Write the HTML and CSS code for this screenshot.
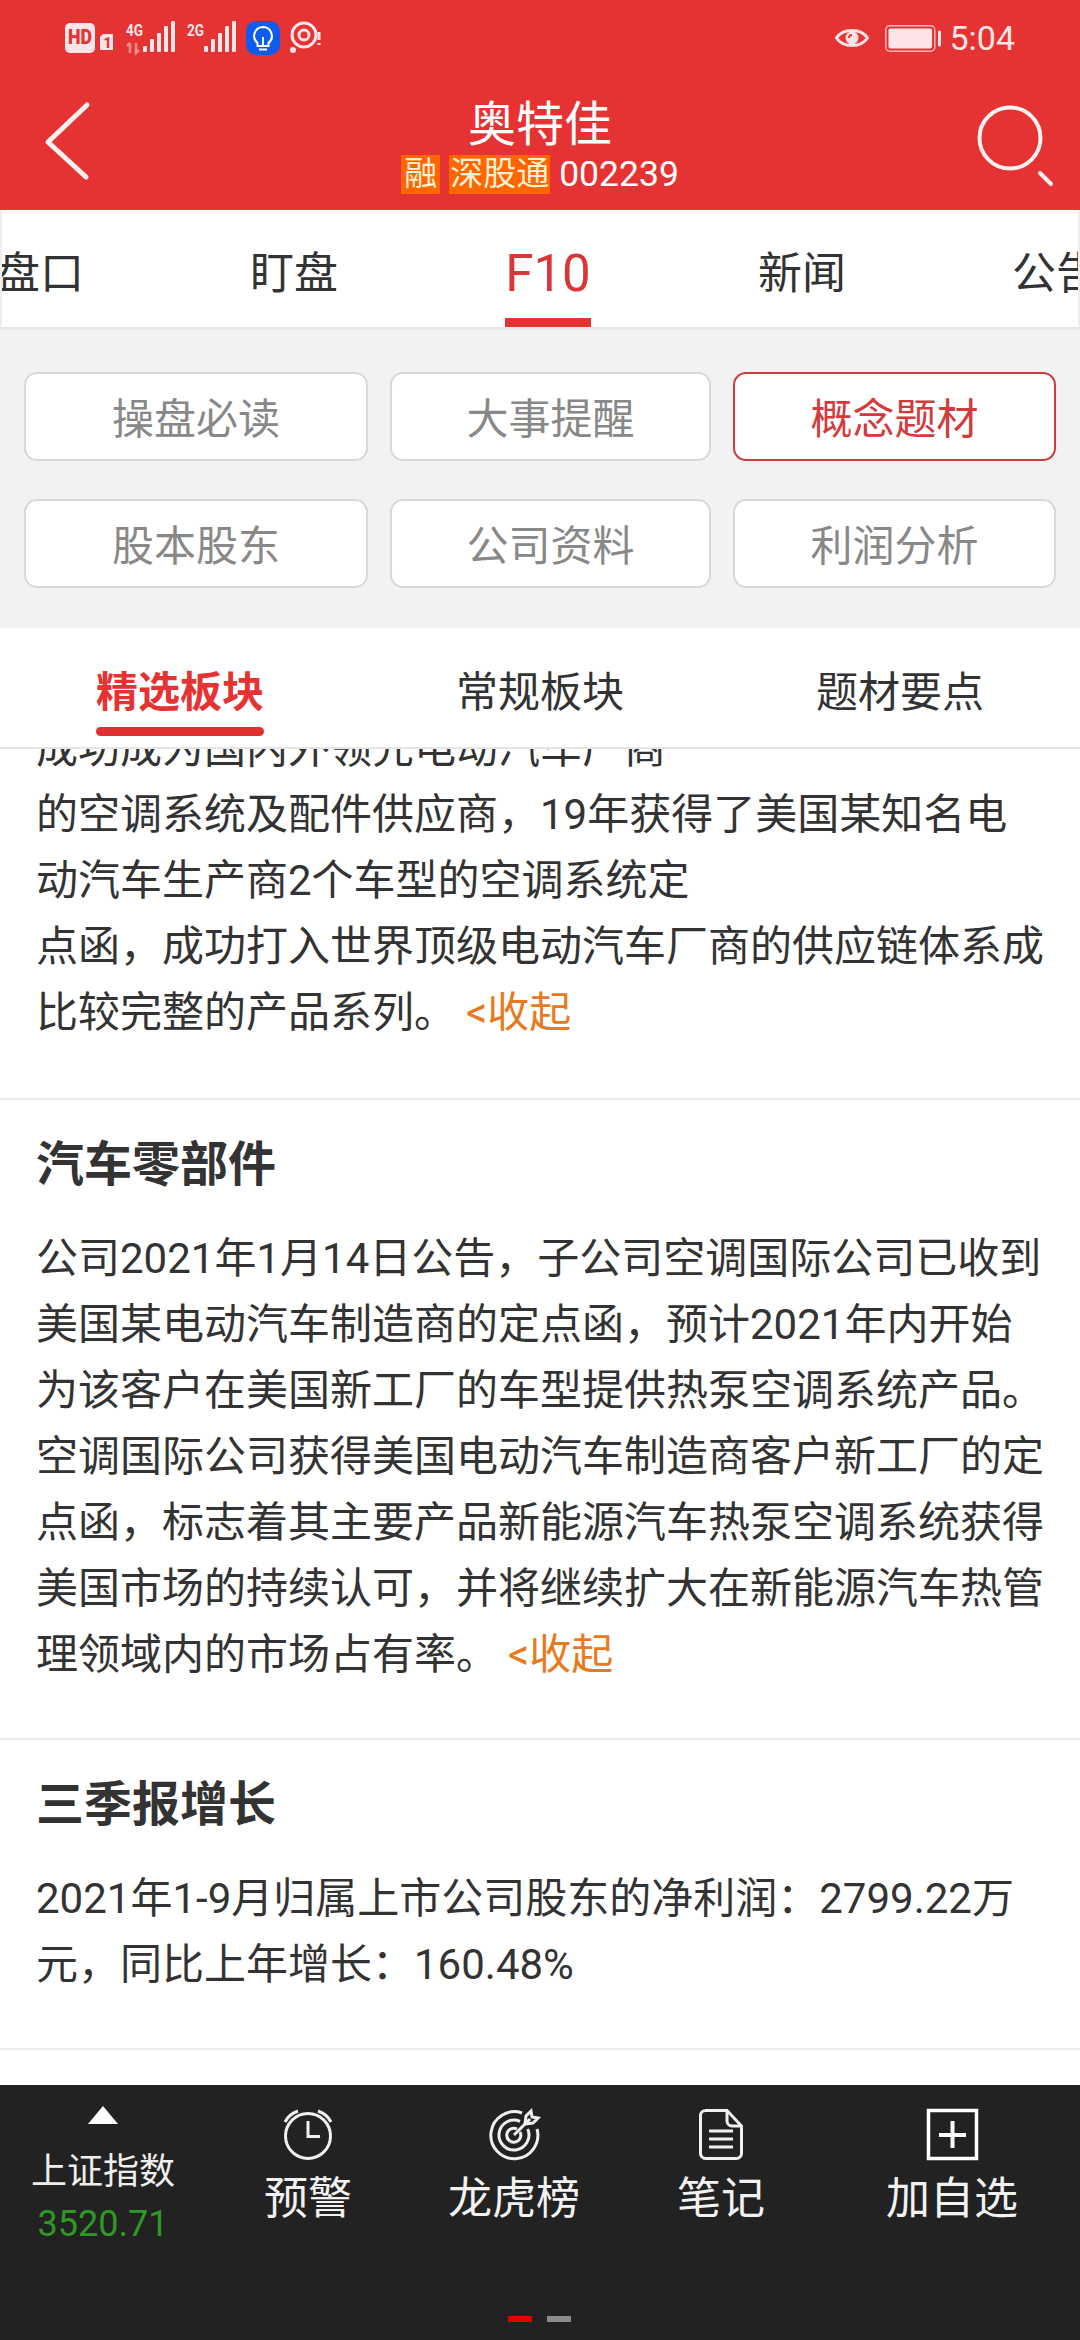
FILE: index.html
```html
<!DOCTYPE html>
<html lang="zh-CN">
<head>
<meta charset="UTF-8" />
<meta name="viewport" content="width=device-width, initial-scale=1"/>
<title>奥特佳 F10</title>
<link rel="stylesheet" href="styles.css">
</head>
<body>
  <div id="app">
    <header class="top">
      <div class="status">
        <svg class="status-left" viewBox="60 18 265 40" width="265" height="40">
          <rect x="65" y="23" width="30" height="30" rx="5" class="st-fill"/>
          <text x="68" y="44" class="st-hd" textLength="24" lengthAdjust="spacingAndGlyphs">HD</text>
          <path d="M100 37 l3 -3 h10 v16 h-13 z" class="st-fill"/>
          <text x="103.500" y="48" class="st-sim">1</text>
          <text x="126" y="36" class="st-net" textLength="17" lengthAdjust="spacingAndGlyphs">4G</text>
          <path d="M130 43 v10 M127 46 l3 -3 M136 43 v10 l3 -3" class="st-arrows"/>
          <g class="st-fill">
            <rect x="143" y="46" width="4" height="6" rx="1"/>
            <rect x="150" y="39" width="4" height="13" rx="1"/>
            <rect x="157" y="33" width="4" height="19" rx="1"/>
            <rect x="164" y="26" width="4" height="26" rx="1"/>
            <rect x="171" y="21" width="4" height="31" rx="1"/>
          </g>
          <text x="187" y="36" class="st-net" textLength="17" lengthAdjust="spacingAndGlyphs">2G</text>
          <g class="st-fill">
            <rect x="204" y="46" width="4" height="6" rx="1"/>
            <rect x="211" y="39" width="4" height="13" rx="1"/>
            <rect x="218" y="33" width="4" height="19" rx="1"/>
            <rect x="225" y="26" width="4" height="26" rx="1"/>
            <rect x="232" y="21" width="4" height="31" rx="1"/>
          </g>
          <rect x="246" y="21" width="34" height="34" rx="10" class="st-blue"/>
          <path d="M263 27 a9 9 0 0 0 -5.500 16 v3 h11 v-3 a9 9 0 0 0 -5.500 -16 z M259 49.500 h8 M263 46 v-9" class="st-bulb"/>
          <circle cx="304" cy="35" r="12" class="st-line"/>
          <circle cx="304" cy="35" r="5" class="st-line"/>
          <circle cx="293" cy="50" r="3" class="st-fill"/>
          <path d="M319 32 v8 M319 43 v2" class="st-line"/>
        </svg>
        <div class="status-right">
          <svg viewBox="0 0 34 26" width="34" height="26">
            <path d="M1.500 13 C8 3 26 3 32.500 13 C26 23 8 23 1.500 13 z" class="st-line"/>
            <circle cx="17" cy="13" r="6.500" class="st-fill"/>
            <path d="M14 13 a3 3 0 0 1 3 -3" class="st-eye"/>
          </svg>
          <svg viewBox="0 0 56 27" width="56" height="27" class="battery">
            <rect x="0.750" y="0.750" width="49" height="25.500" rx="4" class="st-thin"/>
            <rect x="3.500" y="3.500" width="43.500" height="20" rx="2" class="st-fill"/>
            <rect x="53" y="5.500" width="3" height="16" rx="1.500" class="st-fill"/>
          </svg>
          <span class="time">5:04</span>
        </div>
      </div>
      <div class="nav">
        <svg class="back" viewBox="0 0 52 80" width="52" height="80">
          <path d="M47 4 L8 41 L46 76" />
        </svg>
        <div class="stock">
          <div class="stock-name">奥特佳</div>
          <div class="stock-sub">
            <span class="tag tag-one">融</span>
            <span class="tag">深股通</span>
            <span class="stock-code">002239</span>
          </div>
        </div>
        <svg class="search" viewBox="0 0 78 78" width="78" height="78">
          <circle cx="33" cy="33" r="30.500"/>
          <path d="M63 68 L74 79"/>
        </svg>
      </div>
    </header>

    <nav class="tabs">
      <div class="tab">盘口</div>
      <div class="tab">盯盘</div>
      <div class="tab tab-on">F10</div>
      <div class="tab">新闻</div>
      <div class="tab">公告</div>
    </nav>

    <section class="btn-panel">
      <div class="btn">操盘必读</div>
      <div class="btn">大事提醒</div>
      <div class="btn btn-on">概念题材</div>
      <div class="btn">股本股东</div>
      <div class="btn">公司资料</div>
      <div class="btn">利润分析</div>
    </section>

    <div class="seg">
      <div class="seg-item seg-on"><span>精选板块</span></div>
      <div class="seg-item"><span>常规板块</span></div>
      <div class="seg-item"><span>题材要点</span></div>
    </div>

    <main class="content">
      <article class="block block-first">
        <p>成功成为国内外领先电动汽车厂商<br>的空调系统及配件供应商，19年获得了美国某知名电<br>动汽车生产商2个车型的空调系统定<br>点函，成功打入世界顶级电动汽车厂商的供应链体系成<br>比较完整的产品系列。<a class="fold">&lt;收起</a></p>
      </article>
      <article class="block">
        <h2>汽车零部件</h2>
        <p>公司2021年1月14日公告，子公司空调国际公司已收到<br>美国某电动汽车制造商的定点函，预计2021年内开始<br>为该客户在美国新工厂的车型提供热泵空调系统产品。<br>空调国际公司获得美国电动汽车制造商客户新工厂的定<br>点函，标志着其主要产品新能源汽车热泵空调系统获得<br>美国市场的持续认可，并将继续扩大在新能源汽车热管<br>理领域内的市场占有率。<a class="fold">&lt;收起</a></p>
      </article>
      <article class="block">
        <h2>三季报增长</h2>
        <p>2021年1-9月归属上市公司股东的净利润：2799.22万<br>元，同比上年增长：160.48%</p>
      </article>
    </main>

    <footer class="bottom">
      <div class="bottom-row">
        <div class="index-item">
          <div class="arrow-up"></div>
          <div class="index-name">上证指数</div>
          <div class="index-val">3520.71</div>
        </div>
        <div class="tool">
          <svg class="tool-icon" viewBox="0 0 51 51" width="51" height="51">
            <circle cx="25" cy="27" r="22.500"/>
            <path d="M25 12 V27.500 H37"/>
            <path d="M2 13 C5 7 9 4 15 2 M48 13 C45 7 41 4 35 2"/>
          </svg>
          <div class="tool-name">预警</div>
        </div>
        <div class="tool">
          <svg class="tool-icon" viewBox="0 0 51 51" width="51" height="51">
            <path d="M33 4 A23.500 23.500 0 1 0 48 20"/>
            <path d="M31 12.300 A15 15 0 1 0 38.700 20"/>
            <path d="M28 20 A7 7 0 1 0 31 23"/>
            <path d="M25 26 L41 10"/>
            <path d="M36 15 L37 7 L42 2 L43 8 L49 9 L44 14 Z"/>
          </svg>
          <div class="tool-name">龙虎榜</div>
        </div>
        <div class="tool">
          <svg class="tool-icon" viewBox="0 0 44 51" width="44" height="51">
            <path d="M6 1.500 H28 L42.500 17 V44.500 a5 5 0 0 1 -5 5 H6.500 a5 5 0 0 1 -5 -5 V6 a5 5 0 0 1 5 -4.500 z"/>
            <path d="M28 2 V12 a5 5 0 0 0 5 5 H42"/>
            <path d="M10 22 H34 M10 30 H34 M10 38 H34"/>
          </svg>
          <div class="tool-name">笔记</div>
        </div>
        <div class="tool">
          <svg class="tool-icon tool-square" viewBox="0 0 51 51" width="51" height="51">
            <rect x="1.500" y="1.500" width="48" height="48"/>
            <path d="M12 26 H39 M25.500 12 V39"/>
          </svg>
          <div class="tool-name">加自选</div>
        </div>
      </div>
      <div class="pager">
        <span class="pager-dot pager-on"></span>
        <span class="pager-dot"></span>
      </div>
    </footer>
  </div>
</body>
</html>
```

FILE: styles.css
```css
/* Reset and base */
* {
  box-sizing: border-box;
}
html, body {
  margin: 0;
  padding: 0;
  height: 100%;
  background: #fff;
  font-family: Roboto, "Noto Sans CJK SC", sans-serif;
  color: #333;
}
#app {
  width: 1080px;
  height: 2340px;
  display: flex;
  flex-direction: column;
  overflow: hidden;
}

/* Red header */
.top {
  height: 210px;
  background: #e53333;
  flex: none;
}
.status {
  height: 72px;
  display: flex;
  justify-content: space-between;
  align-items: flex-start;
  padding: 18px 65px 0 60px;
}
.status-right {
  display: flex;
  align-items: center;
  height: 40px;
  gap: 16px;
}
.battery {
  margin-right: -8px;
}
.time {
  font-size: 34px;
  line-height: 40px;
  color: #fde4e6;
}
.st-fill {
  fill: #fde4e6;
}
.st-line {
  fill: none;
  stroke: #fde4e6;
  stroke-width: 3;
}
.st-thin {
  fill: none;
  stroke: #fbb9bc;
  stroke-width: 1.5;
}
.st-eye {
  fill: none;
  stroke: #e53333;
  stroke-width: 2;
}
.st-hd {
  font-size: 21px;
  font-weight: 900;
  fill: #e53333;
}
.st-sim {
  font-size: 14px;
  font-weight: 900;
  fill: #e53333;
}
.st-net {
  font-size: 17px;
  font-weight: 700;
  fill: #fde4e6;
}
.st-arrows {
  fill: none;
  stroke: #f58a8d;
  stroke-width: 2.500;
}
.st-blue {
  fill: #0d5cf0;
}
.st-bulb {
  fill: none;
  stroke: #fff;
  stroke-width: 2;
}

.nav {
  height: 138px;
  display: grid;
  grid-template-columns: 1fr auto 1fr;
  align-items: center;
}
.back {
  margin-left: 40px;
}
.back path {
  fill: none;
  stroke: #fdf0f0;
  stroke-width: 5;
  stroke-linecap: round;
  stroke-linejoin: round;
}
.search {
  justify-self: end;
  margin: 6px 25px 0 0;
  overflow: visible;
}
.search circle,
.search path {
  fill: none;
  stroke: #fdf0f0;
  stroke-width: 4;
  stroke-linecap: round;
}
.stock {
  align-self: start;
  padding-top: 25px;
  display: flex;
  flex-direction: column;
  align-items: center;
}
.stock-name {
  font-size: 48px;
  line-height: 56px;
  color: #fff;
}
.stock-sub {
  display: flex;
  align-items: center;
  height: 39px;
  margin-top: 2px;
  color: #fff;
}
.tag {
  height: 39px;
  padding: 0 1px;
  margin-right: 9px;
  background: #ff6600;
  color: #fff2d6;
  font-size: 33px;
  line-height: 38px;
}
.tag-one {
  padding: 0 3px;
}
.stock-code {
  font-size: 35.500px;
  line-height: 39px;
}

/* Scrolling tabs */
.tabs {
  height: 120px;
  flex: none;
  display: flex;
  background: #fff;
  border-bottom: 3px solid #e9e9e9;
  border-left: 2px solid #eee;
  border-right: 2px solid #eee;
  overflow: hidden;
}
.tab {
  position: relative;
  width: 254px;
  flex: none;
  font-size: 44px;
  line-height: 128px;
  text-align: center;
  color: #333;
}
.tab:first-child {
  margin-left: -89px;
}
.tab-on {
  font-size: 51px;
  color: #d9363a;
}
.tab-on::after {
  content: "";
  position: absolute;
  left: 84px;
  bottom: 0;
  width: 86px;
  height: 9px;
  background: #e53333;
}

/* Button grid */
.btn-panel {
  height: 298px;
  flex: none;
  display: grid;
  grid-template-columns: 344px 321px 323px;
  grid-auto-rows: 89px;
  column-gap: 22px;
  row-gap: 38px;
  padding: 42px 0 0 24px;
  background: #f2f2f2;
}
.btn {
  display: flex;
  justify-content: center;
  align-items: center;
  padding-bottom: 2px;
  background: #fff;
  border: 2px solid #d8d8d8;
  border-radius: 13px;
  font-size: 42px;
  color: #888;
}
.btn-on {
  border-color: #cf3a3c;
  color: #d43a3c;
}

/* Segment tabs */
.seg {
  height: 121px;
  flex: none;
  display: grid;
  grid-template-columns: repeat(3, 360px);
  background: #fff;
  border-bottom: 2px solid #e6e6e6;
}
.seg-item {
  display: flex;
  justify-content: center;
  padding-top: 40px;
  font-size: 42px;
  line-height: 50px;
  color: #333;
}
.seg-on span {
  align-self: flex-start;
  padding-bottom: 10px;
  font-weight: 700;
  color: #e53333;
  position: relative;
}
.seg-on span::after {
  content: "";
  position: absolute;
  left: 0;
  right: 0;
  bottom: -8px;
  height: 9px;
  border-radius: 5px;
  background: #e0302f;
}

/* Article list */
.content {
  flex: 1;
  min-height: 0;
  overflow: hidden;
  background: #fff;
}
.block {
  padding: 32px 0 50px 36px;
  border-bottom: 2px solid #ececec;
}
.block-first {
  padding-top: 0;
  padding-bottom: 52px;
  margin-top: -33px;
}
.block h2 {
  margin: 0 0 28px 0;
  font-size: 48px;
  line-height: 66px;
  font-weight: 700;
  color: #333;
}
.block p {
  margin: 0;
  font-size: 42px;
  line-height: 66px;
  white-space: nowrap;
  color: #333;
}
.fold {
  margin-left: 10px;
  color: #e8791e;
}

/* Dark bottom bar */
.bottom {
  height: 255px;
  flex: none;
  background: #222;
  position: relative;
}
.bottom-row {
  display: grid;
  grid-template-columns: 206px 204px 208px 206px 256px;
  padding-top: 24px;
}
.index-item,
.tool {
  display: flex;
  flex-direction: column;
  align-items: center;
}
.arrow-up {
  width: 0;
  height: 0;
  margin-top: -3px;
  border-left: 15px solid transparent;
  border-right: 15px solid transparent;
  border-bottom: 18px solid #fff;
}
.index-name {
  margin-top: 26px;
  font-size: 36px;
  line-height: 44px;
  color: #eee;
}
.index-val {
  margin-top: 10px;
  font-size: 36px;
  line-height: 40px;
  color: #2f9a23;
}
.tool-icon {
  display: block;
  overflow: visible;
}
.tool-icon path,
.tool-icon circle,
.tool-icon rect {
  fill: none;
  stroke: #f0f0f0;
  stroke-width: 3;
}
.tool-square rect {
  stroke: #fff;
  stroke-width: 3.500;
}
.tool-square path {
  stroke: #fff;
  stroke-width: 4;
}
.tool-name {
  margin-top: 13px;
  font-size: 44px;
  line-height: 52px;
  color: #f2f2f2;
}
.pager {
  position: absolute;
  left: 508px;
  top: 231px;
  display: flex;
  gap: 15px;
}
.pager-dot {
  width: 24px;
  height: 6px;
  background: #8c8c8c;
}
.pager-on {
  background: #e60000;
}
```
